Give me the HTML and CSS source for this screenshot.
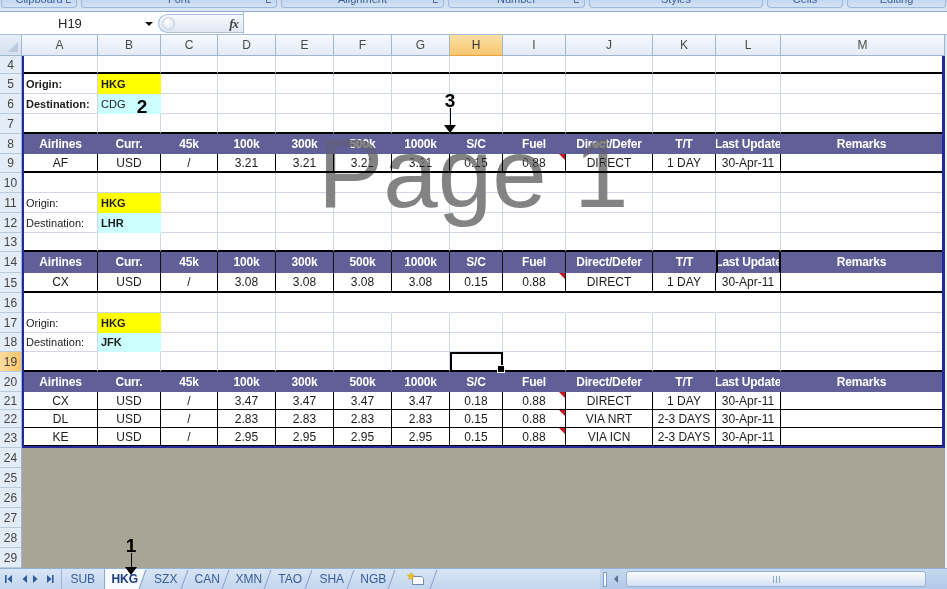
FILE: index.html
```html
<!DOCTYPE html>
<html>
<head>
<meta charset="utf-8">
<title>Sheet</title>
<link rel="stylesheet" href="styles.css">
</head>
<body>
<div class="ribbon">
  <div class="grp g1"><span>Clipboard</span><em></em></div>
  <div class="grp g2"><span>Font</span><em></em></div>
  <div class="grp g3"><span>Alignment</span><em></em></div>
  <div class="grp g4"><span>Number</span><em></em></div>
  <div class="grp g5"><span>Styles</span></div>
  <div class="grp g6"><span>Cells</span></div>
  <div class="grp g7"><span>Editing</span></div>
</div>
<div class="fbar">
  <div class="namebox"><span class="nm">H19</span><span class="dd"></span></div>
  <div class="fxbtn"><span class="grip"></span><span class="fx">fx</span></div>
  <div class="finput"></div>
</div>
<div class="colheads">
  <div class="corner"></div>
  <div class="ch">A</div><div class="ch">B</div><div class="ch">C</div><div class="ch">D</div><div class="ch">E</div><div class="ch">F</div><div class="ch">G</div><div class="ch on">H</div><div class="ch">I</div><div class="ch">J</div><div class="ch">K</div><div class="ch">L</div><div class="ch">M</div>
  <div class="chs"></div>
</div>
<div class="sheet">
  <div class="rowheads">
    <div class="rh h18">4</div><div class="rh h20">5</div><div class="rh h20">6</div><div class="rh h20">7</div>
    <div class="rh h20">8</div><div class="rh h19">9</div><div class="rh h20">10</div><div class="rh h20">11</div>
    <div class="rh h20">12</div><div class="rh h19">13</div><div class="rh h21">14</div><div class="rh h20">15</div>
    <div class="rh h20">16</div><div class="rh h20">17</div><div class="rh h19">18</div><div class="rh h20 on">19</div>
    <div class="rh h20">20</div><div class="rh h18">21</div><div class="rh h18">22</div><div class="rh h20">23</div>
    <div class="rh h20">24</div><div class="rh h20">25</div><div class="rh h20">26</div><div class="rh h20">27</div>
    <div class="rh h20">28</div><div class="rh h20">29</div>
  </div>
  <div class="cells">
    <div class="print">
      <!-- 4 -->
      <div class="row h18 tb"><div></div><div></div><div></div><div></div><div></div><div></div><div></div><div></div><div></div><div></div><div></div><div></div><div></div></div>
      <!-- 5 -->
      <div class="row h20"><div class="l b">Origin:</div><div class="l b yel">HKG</div><div></div><div></div><div></div><div></div><div></div><div></div><div></div><div></div><div></div><div></div><div></div></div>
      <!-- 6 -->
      <div class="row h20"><div class="l b">Destination:</div><div class="l cy">CDG</div><div></div><div></div><div></div><div></div><div></div><div></div><div></div><div></div><div></div><div></div><div></div></div>
      <!-- 7 -->
      <div class="row h20 tb"><div></div><div></div><div></div><div></div><div></div><div></div><div></div><div></div><div></div><div></div><div></div><div></div><div></div></div>
      <!-- 8 -->
      <div class="row h20 hd"><div>Airlines</div><div>Curr.</div><div>45k</div><div>100k</div><div>300k</div><div>500k</div><div>1000k</div><div>S/C</div><div>Fuel</div><div>Direct/Defer</div><div>T/T</div><div>Last Update</div><div>Remarks</div></div>
      <!-- 9 -->
      <div class="row h19 dt tb"><div>AF</div><div>USD</div><div>/</div><div>3.21</div><div>3.21</div><div>3.21</div><div>3.21</div><div>0.15</div><div class="cm">0.88</div><div>DIRECT</div><div>1 DAY</div><div>30-Apr-11</div><div></div></div>
      <!-- 10 -->
      <div class="row h20"><div></div><div></div><div></div><div></div><div></div><div></div><div></div><div></div><div></div><div></div><div></div><div></div><div></div></div>
      <!-- 11 -->
      <div class="row h20"><div class="l">Origin:</div><div class="l b yel">HKG</div><div></div><div></div><div></div><div></div><div></div><div></div><div></div><div></div><div></div><div></div><div></div></div>
      <!-- 12 -->
      <div class="row h20"><div class="l">Destination:</div><div class="l b cy">LHR</div><div></div><div></div><div></div><div></div><div></div><div></div><div></div><div></div><div></div><div></div><div></div></div>
      <!-- 13 -->
      <div class="row h19 tb"><div></div><div></div><div></div><div></div><div></div><div></div><div></div><div></div><div></div><div></div><div></div><div></div><div></div></div>
      <!-- 14 -->
      <div class="row h21 hd hdl"><div>Airlines</div><div>Curr.</div><div>45k</div><div>100k</div><div>300k</div><div>500k</div><div>1000k</div><div>S/C</div><div>Fuel</div><div>Direct/Defer</div><div class="nob">T/T</div><div class="thk">Last Update</div><div>Remarks</div></div>
      <!-- 15 -->
      <div class="row h20 dt tb"><div>CX</div><div>USD</div><div>/</div><div>3.08</div><div>3.08</div><div>3.08</div><div>3.08</div><div>0.15</div><div class="cm">0.88</div><div>DIRECT</div><div>1 DAY</div><div>30-Apr-11</div><div></div></div>
      <!-- 16 -->
      <div class="row h20"><div></div><div></div><div></div><div></div><div></div><div class="nr"></div><div class="nr"></div><div class="nr"></div><div class="nr"></div><div class="nr"></div><div class="nr"></div><div></div><div></div></div>
      <!-- 17 -->
      <div class="row h20"><div class="l">Origin:</div><div class="l b yel">HKG</div><div></div><div></div><div></div><div></div><div></div><div></div><div></div><div></div><div></div><div></div><div></div></div>
      <!-- 18 -->
      <div class="row h19"><div class="l">Destination:</div><div class="l b cy">JFK</div><div></div><div></div><div></div><div></div><div></div><div></div><div></div><div></div><div></div><div></div><div></div></div>
      <!-- 19 -->
      <div class="row h20 tb"><div></div><div></div><div></div><div></div><div></div><div></div><div></div><div class="sel"></div><div></div><div></div><div></div><div></div><div></div></div>
      <!-- 20 -->
      <div class="row h20 hd"><div>Airlines</div><div>Curr.</div><div>45k</div><div>100k</div><div>300k</div><div>500k</div><div>1000k</div><div>S/C</div><div>Fuel</div><div>Direct/Defer</div><div>T/T</div><div>Last Update</div><div>Remarks</div></div>
      <!-- 21 -->
      <div class="row h18 dt"><div>CX</div><div>USD</div><div>/</div><div>3.47</div><div>3.47</div><div>3.47</div><div>3.47</div><div>0.18</div><div class="cm">0.88</div><div>DIRECT</div><div>1 DAY</div><div>30-Apr-11</div><div></div></div>
      <!-- 22 -->
      <div class="row h18 dt"><div>DL</div><div>USD</div><div>/</div><div>2.83</div><div>2.83</div><div>2.83</div><div>2.83</div><div>0.15</div><div class="cm">0.88</div><div>VIA NRT</div><div>2-3 DAYS</div><div>30-Apr-11</div><div></div></div>
      <!-- 23 -->
      <div class="row h18 dt"><div>KE</div><div>USD</div><div>/</div><div>2.95</div><div>2.95</div><div>2.95</div><div>2.95</div><div>0.15</div><div class="cm">0.88</div><div>VIA ICN</div><div>2-3 DAYS</div><div>30-Apr-11</div><div></div></div>
    </div>
    <div class="outside"></div>
  </div>
  <div class="vstrip"></div>
</div>
<div class="tabbar">
  <div class="nav">
    <svg width="62" height="20" viewBox="0 0 62 20">
      <rect x="5" y="6" width="1.6" height="8" fill="#2f5a9e"/>
      <path d="M12 6 L7.5 10 L12 14 Z" fill="#2f5a9e"/>
      <path d="M27 6 L22.5 10 L27 14 Z" fill="#2f5a9e"/>
      <path d="M33 6 L37.5 10 L33 14 Z" fill="#2f5a9e"/>
      <path d="M47 6 L51.5 10 L47 14 Z" fill="#2f5a9e"/>
      <rect x="52" y="6" width="1.6" height="8" fill="#2f5a9e"/>
    </svg>
  </div>
  <div class="tabs">
    <div class="tab first">SUB</div>
    <div class="tab active">HKG</div>
    <div class="tab">SZX</div>
    <div class="tab">CAN</div>
    <div class="tab">XMN</div>
    <div class="tab">TAO</div>
    <div class="tab">SHA</div>
    <div class="tab">NGB</div>
    <div class="tab newtab">
      <svg width="18" height="14" viewBox="0 0 18 14">
        <path d="M5.5 4.5 H14.5 L16.5 6.5 V12.5 H5.5 Z" fill="#fff" stroke="#6f8bb8"/>
        <path d="M4 0.5 L5 3 L7.5 3.3 L5.6 5 L6.2 7.5 L4 6.2 L1.8 7.5 L2.4 5 L0.5 3.3 L3 3 Z" fill="#f4c21a" stroke="#c99a00" stroke-width="0.5"/>
      </svg>
    </div>
    <div class="tab tail"></div>
  </div>
  <div class="hscroll">
    <div class="split"></div>
    <div class="larr"></div>
    <div class="thumb"><span class="gl"></span></div>
  </div>
</div>

<div class="watermark">Page 1</div>
<div class="ann a3"><b>3</b><i class="stem s17"></i><i class="head"></i></div>
<div class="ann a2"><b>2</b></div>
<div class="ann a1"><b>1</b><i class="stem s14"></i><i class="head"></i></div>
</body>
</html>
```
FILE: styles.css
```css
* { box-sizing: border-box; margin: 0; padding: 0; }
html, body { width: 947px; height: 589px; overflow: hidden; background: #fff; }
body { font-family: "Liberation Sans", Arial, sans-serif; font-size: 12px; color: #111; position: relative; }

/* ribbon group labels (cropped) */
.ribbon { height: 11px; display: flex; gap: 4px; padding: 0 1px; background: linear-gradient(#cadbf1, #dde8f6); }
.grp { position: relative; height: 8px; overflow: hidden; border: 1px solid #9cb8dd; border-top: none; border-radius: 0 0 4px 4px; background: linear-gradient(#c3d7f0, #d4e3f6); color: #3e5f95; font-size: 11px; }
.grp span { position: absolute; left: 0; right: 0; top: -7px; line-height: 12px; text-align: center; }
.grp em { position: absolute; right: 5px; top: 0; width: 5px; height: 3px; border-left: 1px solid #56739f; border-bottom: 1px solid #56739f; }
.g1 { width: 76px; }
.g2 { width: 196px; }
.g3 { width: 163px; }
.g4 { width: 137px; }
.g5 { width: 174px; }
.g6 { width: 76px; }
.g7 { flex: 1; }

/* formula bar */
.fbar { height: 24px; display: flex; border-top: 1px solid #8eaad0; border-bottom: 1px solid #a6bcd9; background: #fff; }
.namebox { position: relative; width: 158px; display: flex; align-items: center; }
.nm { margin-left: 58px; font-size: 13px; color: #222; }
.dd { position: absolute; left: 145px; top: 10px; border-left: 4px solid transparent; border-right: 4px solid transparent; border-top: 4px solid #111; }
.fxbtn { position: relative; width: 85px; height: 19px; margin-top: 2px; border: 1px solid #a9bdd8; border-right: none; border-radius: 10px 0 0 10px; background: linear-gradient(#f7f9fc, #dfe7f2); }
.grip { position: absolute; left: 3px; top: 2px; width: 13px; height: 13px; border-radius: 50%; border: 1px solid #c3cfdf; background: radial-gradient(circle at 40% 35%, #fff, #d5dfeb); }
.fx { position: absolute; right: 5px; top: 1px; font: italic bold 13px "Liberation Serif", serif; color: #444; letter-spacing: -1px; }
.finput { flex: 1; border-left: 1px solid #a6bcd9; }

/* column headers */
.colheads { height: 21px; display: grid; grid-template-columns: 22px 76px 63px 57px 58px 58px 58px 58px 53px 63px 87px 63px 65px 164px 2px; }
.corner { background: linear-gradient(#e7eef8, #d5e0ef); border-right: 1px solid #9eb6ce; border-bottom: 1px solid #9eb6ce; position: relative; }
.corner::after { content: ""; position: absolute; right: 3px; bottom: 3px; border-left: 10px solid transparent; border-bottom: 10px solid #b9c9de; }
.ch { display: flex; align-items: center; justify-content: center; background: linear-gradient(#f6f9fd, #e3ebf6); border-right: 1px solid #9eb6ce; border-bottom: 1px solid #9eb6ce; color: #4a4a4a; font-size: 12px; }
.ch.on { background: linear-gradient(#fbe0a6, #f6c66d); border-bottom-color: #e8a33d; color: #333; }
.chs { background: #dce7f5; }

/* sheet */
.sheet { display: flex; height: 512px; }
.rowheads { width: 22px; display: flex; flex-direction: column; }
.rh { flex: none; display: flex; align-items: center; justify-content: center; background: #e4ecf7; border-right: 1px solid #9eb6ce; border-bottom: 1px solid #b8cade; color: #444; font-size: 12px; }
.rh.on { background: linear-gradient(90deg, #fbdc9f, #f7c46a); }
.cells { width: 923px; display: flex; flex-direction: column; }
.print { border-left: 2px solid #23289a; border-right: 3px solid #23289a; border-bottom: 2px solid #23289a; }
.outside { flex: 1; background: #a9a596; }
.vstrip { flex: 1; background: #eef3fa; }

.h18 { height: 18px; }
.h19 { height: 19px; }
.h20 { height: 20px; }
.h21 { height: 21px; }

.row { display: grid; grid-template-columns: 74px 63px 57px 58px 58px 58px 58px 53px 63px 87px 63px 65px 161px; }
.row > div { display: flex; align-items: center; justify-content: center; white-space: nowrap; overflow: hidden; border-right: 1px solid #d0d7e5; border-bottom: 1px solid #d0d7e5; font-size: 12px; color: #1c1c1c; }
.row > div:last-child { border-right: none; }
.tb > div { border-bottom: 2px solid #000; }
.dt > div { border-right-color: #000; border-bottom-color: #000; }

.row > .l { justify-content: flex-start; padding-left: 2px; font-size: 11px; }
.row > .b { font-weight: bold; }
.row > .yel { background: #ffff00; border-right-color: #ffff00; border-bottom-color: #ffff00; padding-left: 3px; }
.row > .cy { background: #ccffff; border-right-color: #ccffff; border-bottom-color: #ccffff; padding-left: 3px; }
.row > .nr { border-right-color: #fff; }

.hd > div { background: #605f98; color: #fff; font-weight: bold; letter-spacing: -0.2px; border-right-color: #605f98; border-bottom-color: #605f98; }
.hdl > div { border-right-color: #111; }
.hd > .nob { border-right: none; }
.hd > .thk { border-left: 2px solid #000; border-right: 2px solid #000; }

.row > .cm { position: relative; }
.row > .cm::after { content: ""; position: absolute; top: 0; right: 0; border-left: 6px solid transparent; border-top: 6px solid #c8141c; }

.row > .sel { position: relative; overflow: visible; outline: 2px solid #000; outline-offset: -2px; z-index: 3; }
.row > .sel::after { content: ""; position: absolute; right: -3px; bottom: -3px; width: 6px; height: 6px; background: #000; border: 1px solid #fff; }

/* sheet tabs */
.tabbar { height: 21px; display: flex; background: linear-gradient(#d8e5f5, #c2d5ee); border-top: 1px solid #95b0d5; }
.nav { width: 62px; flex: none; border-right: 1px solid #9db5d8; }
.nav svg { display: block; }
.tabs { width: 538px; flex: none; display: flex; }
.tab { position: relative; flex: none; width: 41.5px; display: flex; align-items: center; justify-content: center; font-size: 12px; color: #3a5c98; }
.tab::before { content: ""; position: absolute; left: -3px; top: 1px; width: 1px; height: 19px; background: #869fc6; transform: skewX(-20deg); }
.tab.first::before { display: none; }
.tab.active { background: #f6f9fd; font-weight: bold; color: #1d3f7e; border-left: 1px solid #8ea8cd; clip-path: polygon(0 0, 100% 0, calc(100% - 6px) 100%, 0 100%); }
.tab.active::before { display: none; }
.newtab svg { display: block; margin-left: 2px; }
.tail { width: 20px; }
.hscroll { flex: 1; display: flex; align-items: center; padding-left: 3px; background: linear-gradient(#c5d7ef, #b2c9e8); }
.split { width: 4px; height: 15px; border: 1px solid #7f9cc6; background: #fff; }
.larr { margin-left: 7px; border-top: 4px solid transparent; border-bottom: 4px solid transparent; border-right: 4px solid #5b6f8c; }
.thumb { margin-left: 8px; width: 300px; height: 16px; border: 1px solid #98b0d3; border-radius: 3px; background: linear-gradient(#fbfdff, #e4ecf7 55%, #d3e0f1); display: flex; align-items: center; justify-content: center; }
.gl { width: 7px; height: 7px; border-left: 1px solid #8ea6c8; border-right: 1px solid #8ea6c8; position: relative; }
.gl::after { content: ""; position: absolute; left: 2px; top: 0; width: 1px; height: 7px; background: #8ea6c8; }

/* overlays */
.watermark { position: absolute; left: 318px; top: 124px; font-family: "Liberation Sans", Arial, sans-serif; font-size: 98px; line-height: 1; color: #838383; mix-blend-mode: darken; white-space: nowrap; z-index: 5; pointer-events: none; }
.ann { position: absolute; display: flex; flex-direction: column; align-items: center; width: 14px; z-index: 6; }
.ann b { font: bold 19px/15px "Liberation Sans", Arial, sans-serif; color: #000; }
.ann .stem { display: block; width: 1px; background: #000; }
.s17 { height: 17px; }
.s14 { height: 14px; }
.ann .head { display: block; width: 0; height: 0; border-left: 6px solid transparent; border-right: 6px solid transparent; border-top: 8px solid #000; }
.a3 { left: 443px; top: 93px; }
.a2 { left: 135px; top: 99px; }
.a1 { left: 124px; top: 538px; }
```
